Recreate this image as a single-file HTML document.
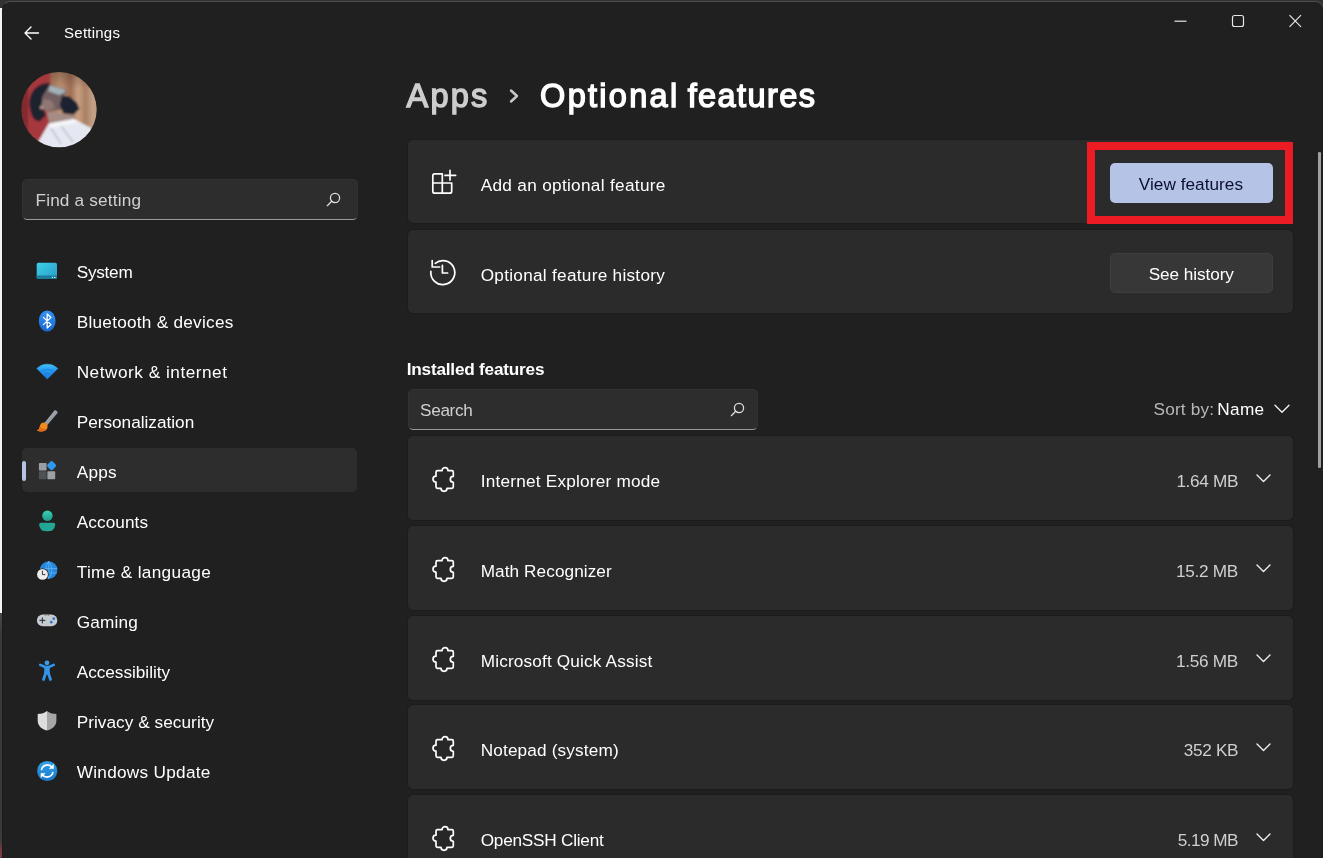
<!DOCTYPE html>
<html lang="en">
<head>
<meta charset="utf-8">
<title>Settings - Optional features</title>
<style>
*{box-sizing:border-box;margin:0;padding:0}
html,body{width:1323px;height:858px;overflow:hidden;background:#202020}
body{position:relative;font-family:"Liberation Sans",sans-serif;color:#fff;-webkit-font-smoothing:antialiased}
.abs{position:absolute}
.t{position:absolute;white-space:nowrap;line-height:20px;font-size:17.2px;color:#fff}
.card{position:absolute;left:408px;width:885px;height:83.4px;background:#2b2b2b;border-radius:5px;box-shadow:0 0 0 1px #1c1c1c}
.nav{left:77px}
.fn{left:481px}
.sz{color:#cfcfcf}
svg{position:absolute;overflow:visible}
</style>
</head>
<body>
<div id="root" style="position:absolute;left:0;top:0;width:1323px;height:858px;will-change:transform">
<!-- desktop strip behind window -->
<div class="abs" style="left:0;top:0;width:1323px;height:12px;background:#323232"></div>
<div class="abs" style="left:0;top:8px;width:3px;height:604.8px;background:#f4f4f4"></div>
<div class="abs" style="left:0;top:612.8px;width:3px;height:246px;background:linear-gradient(#4a4a4a,#3a3a3a 20px,#3a3a3a 226px,#7a3a40 238px)"></div>
<!-- window -->
<div id="win" class="abs" style="left:2.1px;top:.9px;width:1321.8px;height:880px;background:#202020;border:1.1px solid #4b4b4b;border-left-color:#1b1b1b;border-radius:8.5px"></div>

<!-- title bar -->
<svg style="left:23px;top:25px" width="18" height="16" viewBox="0 0 18 16" fill="none" stroke="#fff" stroke-width="1.4" stroke-linecap="round" stroke-linejoin="round"><path d="M15.5 8H2M8 2L2 8l6 6"/></svg>
<span class="t" id="t_settings" style="left:64.12px;top:23px;letter-spacing:0.229px;font-size:15px">Settings</span>
<svg style="left:1174px;top:14px" width="130" height="14" viewBox="0 0 130 14" fill="none" stroke="#e6e6e6" stroke-width="1.2"><path d="M0.5 7.2h12"/><rect x="58.5" y="1.5" width="11" height="11" rx="2"/><path d="M115.5 1.2l11.5 11.6M127 1.2l-11.5 11.6"/></svg>

<!-- avatar -->
<svg id="avatar" style="left:21px;top:72px" width="76" height="76" viewBox="0 0 76 76">
<defs><clipPath id="avc"><circle cx="38" cy="37.6" r="37.7"/></clipPath>
<filter id="avb" x="-10%" y="-10%" width="120%" height="120%"><feGaussianBlur stdDeviation="0.8"/></filter>
<linearGradient id="curt" x1="0" x2="1" y1="0" y2="0"><stop offset="0" stop-color="#a87a5e"/><stop offset=".2" stop-color="#c39776"/><stop offset=".4" stop-color="#9c6d53"/><stop offset=".55" stop-color="#caa282"/><stop offset=".7" stop-color="#a97f63"/><stop offset=".85" stop-color="#c4a288"/><stop offset="1" stop-color="#b8957a"/></linearGradient>
<linearGradient id="curtd" x1="0" x2="0" y1="0" y2="1"><stop offset="0" stop-color="#5a3a2c" stop-opacity=".55"/><stop offset=".25" stop-color="#5a3a2c" stop-opacity="0"/></linearGradient></defs>
<g clip-path="url(#avc)"><g filter="url(#avb)">
<rect x="-4" y="-4" width="84" height="84" fill="#a5383e"/>
<rect x="-4" y="-4" width="11" height="84" fill="#83292f"/>
<rect x="29.5" y="-4" width="50" height="84" fill="url(#curt)"/>
<rect x="29.5" y="-4" width="50" height="84" fill="url(#curtd)"/>
<path d="M28.6 11.6Q19 10 12 19Q6 28 9.7 40Q12 49 18.5 49.4L25 43L21 35L22 24L30 15Z" fill="#1b202d"/>
<path d="M28.6 12.9L43.3 17.1L46.4 20.3L41.2 24.5L40.2 38.1L25.5 39.2L20.2 35L21.3 24.5Z" fill="#735e60"/>
<path d="M29 13.5L43 17.4L45 20L38 23L27 19Z" fill="#a3b2ba"/>
<path d="M22 27L30 28L34 36L25.5 39.2L20.5 35Z" fill="#8f7773"/>
<circle cx="20.8" cy="35.4" r="2" fill="#b0918a"/>
<path d="M25.5 39.2L41 41.5L53 43.4L52 50L28.6 52.6Z" fill="#a58c85"/>
<path d="M41.2 23.4L48.5 24.5L55.9 30.8L58.5 37L52.7 42.6L42.3 41.5L38.6 33Z" fill="#1c2230"/>
<path d="M16 72L27.6 51.7L52.7 47L70 56L78 60V80H12Z" fill="#e6e8f1"/>
<path d="M40 54L52 70M30 56L40 72" stroke="#bcc0d2" stroke-width="1.5" fill="none"/>
<path d="M27.6 51.7L52.7 47L58 50L30 56Z" fill="#f6f6fa"/>
</g></g></svg>

<!-- sidebar search -->
<div class="abs" style="left:22.3px;top:179px;width:335.3px;height:41px;background:#2d2d2d;border-radius:5px;border:1px solid #323232;border-bottom:1.5px solid #9a9a9a"></div>
<span class="t" id="t_find" style="left:35.47px;top:190px;letter-spacing:0.176px;color:#d0d0d0">Find a setting</span>
<svg style="left:326px;top:192px" width="16" height="16" viewBox="0 0 16 16" fill="none" stroke="#e0e0e0" stroke-width="1.25" stroke-linecap="round"><circle cx="9" cy="6" r="4.6"/><path d="M5.7 9.3L1.3 13.7"/></svg>

<!-- selected nav -->
<div class="abs" style="left:22px;top:448px;width:335px;height:44px;background:#2d2d2d;border-radius:5px"></div>
<div class="abs" style="left:22px;top:461px;width:4px;height:20px;background:#b4c3e6;border-radius:2px"></div>

<!-- nav labels -->
<span class="t nav" id="n0" style="left:76.70px;top:262px;letter-spacing:-0.255px">System</span>
<span class="t nav" id="n1" style="left:76.70px;top:312px;letter-spacing:0.261px">Bluetooth &amp; devices</span>
<span class="t nav" id="n2" style="left:76.70px;top:362px;letter-spacing:0.522px">Network &amp; internet</span>
<span class="t nav" id="n3" style="left:76.70px;top:412px;letter-spacing:0.001px">Personalization</span>
<span class="t nav" id="n4" style="left:76.70px;top:462px;letter-spacing:0.283px">Apps</span>
<span class="t nav" id="n5" style="left:76.70px;top:512px;letter-spacing:0.101px">Accounts</span>
<span class="t nav" id="n6" style="left:76.70px;top:562px;letter-spacing:0.341px">Time &amp; language</span>
<span class="t nav" id="n7" style="left:76.70px;top:612px;letter-spacing:0.193px">Gaming</span>
<span class="t nav" id="n8" style="left:76.70px;top:662px;letter-spacing:-0.016px">Accessibility</span>
<span class="t nav" id="n9" style="left:76.70px;top:712px;letter-spacing:0.054px">Privacy &amp; security</span>
<span class="t nav" id="n10" style="left:76.70px;top:762px;letter-spacing:0.289px">Windows Update</span>

<!-- NAVICONS -->
<svg id="navicons" style="left:0;top:0" width="70" height="858" viewBox="0 0 70 858">
<defs>
<linearGradient id="gsys" x1="0" y1="0" x2="1" y2="1"><stop offset="0" stop-color="#3bd0ea"/><stop offset="1" stop-color="#2a9cc6"/></linearGradient>
<linearGradient id="gbt" x1="0" y1="0" x2="0" y2="1"><stop offset="0" stop-color="#3593f2"/><stop offset="1" stop-color="#1767d2"/></linearGradient>
<linearGradient id="gwifi" x1="0" y1="0" x2="0" y2="1"><stop offset="0" stop-color="#40c0fa"/><stop offset=".45" stop-color="#2497ee"/><stop offset="1" stop-color="#1b7be0"/></linearGradient>
<linearGradient id="ghandle" x1="0" y1="0" x2="1" y2="1"><stop offset="0" stop-color="#b9bec6"/><stop offset="1" stop-color="#7b8089"/></linearGradient>
<linearGradient id="gacc" x1="0" y1="0" x2="0" y2="1"><stop offset="0" stop-color="#3ad2b4"/><stop offset="1" stop-color="#1f9a8c"/></linearGradient>
<linearGradient id="gupd" x1="0" y1="0" x2="0" y2="1"><stop offset="0" stop-color="#31a2ec"/><stop offset="1" stop-color="#1b78c8"/></linearGradient>
</defs>
<!-- system -->
<rect x="36.7" y="262.8" width="20.3" height="16.2" rx="1.6" fill="url(#gsys)"/>
<path d="M36.7 275.6H57V277.4Q57 279 55.4 279H38.3Q36.7 279 36.7 277.4Z" fill="#1a7c9c"/>
<circle cx="52.4" cy="277.4" r=".7" fill="#d8f4fb"/><circle cx="54.8" cy="277.4" r=".7" fill="#d8f4fb"/>
<!-- bluetooth -->
<ellipse cx="47.2" cy="321" rx="8.4" ry="10.6" fill="url(#gbt)"/>
<path d="M43.4 317.4L51 324.6L47.2 328V314L51 317.4L43.4 324.6" fill="none" stroke="#fff" stroke-width="1.3" stroke-linejoin="round" stroke-linecap="round"/>
<!-- wifi -->
<path d="M47.3 379L36.8 368.5A14.85 14.85 0 0 1 57.8 368.5Z" fill="url(#gwifi)" stroke="url(#gwifi)" stroke-width=".6" stroke-linejoin="round"/>
<path d="M40.4 372.1A9.8 9.8 0 0 1 54.2 372.1" fill="none" stroke="#1a78de" stroke-width="1" opacity=".7"/>
<path d="M43.6 375.3A5.2 5.2 0 0 1 51 375.3" fill="none" stroke="#1768cf" stroke-width="1" opacity=".6"/>
<!-- brush -->
<path d="M54.6 410.3Q56.9 409.5 57.8 412.7L46.3 426.2L43.6 424Z" fill="url(#ghandle)"/>
<path d="M43.9 422.6Q47.8 423.2 47.6 427Q46.6 431.6 41 431.4Q38.2 431.6 36.8 430.6Q39.6 429.6 39.8 426.4Q40.4 422.8 43.9 422.6Z" fill="#f28a1e"/>
<path d="M41 431.4Q38.2 431.6 36.8 430.6Q39.6 429.6 39.8 426.4Q43 430 47.2 428.6Q45.8 431.4 41 431.4Z" fill="#e06a17"/>
<!-- apps -->
<rect x="38.9" y="463" width="7.7" height="7.4" rx=".7" fill="#9a9da2"/>
<rect x="38.9" y="471.3" width="7.7" height="7.9" rx=".7" fill="#4e5155"/>
<rect x="47.4" y="471.3" width="7.8" height="7.9" rx=".7" fill="#9da0a6"/>
<rect x="47.9" y="461.9" width="7.4" height="7.4" rx="2" fill="#2f98ec" transform="rotate(45 51.6 465.6)"/>
<!-- accounts -->
<circle cx="47.4" cy="515.7" r="5.2" fill="url(#gacc)"/>
<path d="M40.8 522.8H53.6Q55.2 522.8 55.2 524.4Q55.2 531.2 47.2 531.2Q39.2 531.2 39.2 524.4Q39.2 522.8 40.8 522.8Z" fill="#22a794"/>
<!-- time & language -->
<circle cx="48.7" cy="570" r="8.7" fill="#2388de"/>
<path d="M40.2 568.5H57.2M41 573H56.8M48.7 561.3V578.7M48.7 561.3Q42.5 570 48.7 578.7M48.7 561.3Q55 570 48.7 578.7" fill="none" stroke="#5fb2f2" stroke-width=".8"/>
<circle cx="42.5" cy="574.4" r="6.2" fill="#202020"/><circle cx="42.5" cy="574.4" r="5.4" fill="#ededed"/>
<path d="M42.4 571V574.6H45" fill="none" stroke="#333" stroke-width="1" stroke-linecap="round" stroke-linejoin="round"/>
<!-- gaming -->
<rect x="36.9" y="614.5" width="20.4" height="11.8" rx="5.9" fill="#c6cad1"/>
<path d="M42.4 617.8V622.8M39.9 620.3H44.9" stroke="#3a3f48" stroke-width="1.2" stroke-linecap="round"/>
<circle cx="51.3" cy="622.2" r="1.35" fill="#2b78d2"/><circle cx="53.8" cy="618.7" r="1.35" fill="#2b78d2"/>
<circle cx="45.8" cy="615.6" r=".5" fill="#555"/><circle cx="48.2" cy="615.6" r=".5" fill="#555"/>
<!-- accessibility -->
<circle cx="47" cy="662.8" r="2.4" fill="#3d9dea"/>
<path d="M40.2 664.9L45.2 667H48.8L53.8 664.9" fill="none" stroke="#3394e8" stroke-width="2.6" stroke-linecap="round" stroke-linejoin="round"/>
<rect x="44.2" y="666" width="5.6" height="8.4" rx="1" fill="#3394e8"/>
<path d="M45.7 673L43.5 679.5M48.3 673L50.5 679.5" fill="none" stroke="#3394e8" stroke-width="2.8" stroke-linecap="round"/>
<!-- privacy -->
<path d="M47 711C44 713.4 40.4 714 37.7 714V720.4C37.7 726 42 729.2 47 730.6Z" fill="#dddddd"/>
<path d="M47 711C50 713.4 53.6 714 56.4 714V720.4C56.4 726 52 729.2 47 730.6Z" fill="#a6a6a6"/>
<!-- update -->
<circle cx="47.2" cy="771" r="10.1" fill="url(#gupd)"/>
<path d="M41.6 769.4A5.9 5.9 0 0 1 52.2 767.6M52.8 772.6A5.9 5.9 0 0 1 42.2 774.4" fill="none" stroke="#fff" stroke-width="1.7" stroke-linecap="round"/>
<path d="M53.4 764.6V768.6H49.4ZM41 777.4V773.4H45Z" fill="#fff" stroke="#fff" stroke-width=".6" stroke-linejoin="round"/>
</svg>


<!-- heading -->
<span class="t" id="h_apps" style="left:406.55px;top:76px;letter-spacing:2.168px;font-size:32.5px;line-height:40px;-webkit-text-stroke:1.4px #cdcdcd;color:#cdcdcd">Apps</span>
<svg style="left:506.5px;top:87.5px" width="14" height="16" viewBox="0 0 14 16" fill="none" stroke="#c8c8c8" stroke-width="2.5" stroke-linecap="round" stroke-linejoin="round"><path d="M4 2.5l6 5.5-6 5.5"/></svg>
<span class="t" id="h_opt" style="left:540.11px;top:76px;letter-spacing:2.284px;font-size:32.5px;line-height:40px;-webkit-text-stroke:1.4px #fff">Optional</span>
<span class="t" id="h_feat" style="left:687.65px;top:76px;letter-spacing:1.423px;font-size:32.5px;line-height:40px;-webkit-text-stroke:1.4px #fff">features</span>

<!-- top cards -->
<div class="card" style="top:140px"></div>
<div class="card" style="top:230px"></div>
<svg style="left:428px;top:168px" width="30" height="30" viewBox="0 0 30 30" fill="none" stroke="#fff" stroke-width="1.7" stroke-linecap="round" stroke-linejoin="round"><path d="M14.3 5.8H6.8Q4.8 5.8 4.8 7.8V23.2Q4.8 25.2 6.8 25.2H21.7Q23.7 25.2 23.7 23.2V15H4.8M14.3 5.8V25.2M22 2.4V12M17 7.4H27.6"/></svg>
<svg style="left:428px;top:258px" width="30" height="30" viewBox="0 0 30 30" fill="none" stroke="#fff" stroke-width="1.7" stroke-linecap="round" stroke-linejoin="round"><path d="M7.2 5.3A12 12 0 1 1 2.87 13.35M4.2 2.6V9H11.6M14.4 7.4V15H19.6"/></svg>
<span class="t fn" id="c_add" style="left:480.70px;top:175px;letter-spacing:0.316px">Add an optional feature</span>
<span class="t fn" id="c_hist" style="left:480.70px;top:265px;letter-spacing:0.281px">Optional feature history</span>

<!-- buttons -->
<div class="abs" style="left:1110px;top:163px;width:163px;height:40px;background:#b4c3e6;border-radius:5px"></div>
<span class="t" id="b_view" style="left:1138.81px;top:174px;letter-spacing:0.032px;color:#0b1030">View features</span>
<div class="abs" style="left:1110px;top:253px;width:163px;height:40px;background:#373737;border-radius:5px;border:1px solid #3e3e3e"></div>
<span class="t" id="b_see" style="left:1148.74px;top:264px;letter-spacing:-0.083px">See history</span>
<!-- red highlight -->
<div class="abs" style="left:1087px;top:142px;width:206px;height:82px;border:8px solid #ec1c24"></div>

<!-- installed features -->
<span class="t" id="t_inst" style="left:406.77px;top:359px;letter-spacing:-0.217px;font-weight:bold">Installed features</span>
<div class="abs" style="left:408px;top:388.8px;width:350px;height:41.3px;background:#2d2d2d;border-radius:5px;border:1px solid #323232;border-bottom:1.5px solid #9a9a9a"></div>
<span class="t" id="t_search" style="left:420.07px;top:400px;letter-spacing:-0.351px;color:#d0d0d0">Search</span>
<svg style="left:730.2px;top:402px" width="16" height="16" viewBox="0 0 16 16" fill="none" stroke="#e0e0e0" stroke-width="1.25" stroke-linecap="round"><circle cx="9" cy="6" r="4.6"/><path d="M5.7 9.3L1.3 13.7"/></svg>
<span class="t" id="t_sort" style="left:1153.54px;top:399px;letter-spacing:0.165px;color:#b8b8b8">Sort by:</span>
<span class="t" id="t_name" style="left:1217.16px;top:399px;letter-spacing:0.393px">Name</span>
<svg style="left:1274px;top:404px" width="16" height="10" viewBox="0 0 16 10" fill="none" stroke="#f0f0f0" stroke-width="1.4" stroke-linecap="round" stroke-linejoin="round"><path d="M1 1.2l7 7 7-7"/></svg>

<!-- FEATURES -->
<div class="card" style="top:436px;height:84px"></div>
<svg style="left:430px;top:465px" width="26" height="30" viewBox="0 0 26 30" fill="#272727" stroke="#fff" stroke-width="1.7" stroke-linejoin="round"><path d="M7.5 5.7H12A3 3 0 0 1 18 5.7H21.8Q23.3 5.7 23.3 7.2V11.3A3 3 0 0 0 23.3 17.3V21.8Q23.3 23.3 21.8 23.3H17A3 3 0 0 1 11 23.3H7.5Q6 23.3 6 21.8V17.2A3 3 0 0 1 6 11.2V7.2Q6 5.7 7.5 5.7Z"/></svg>
<span class="t fn" id="f0" style="left:480.70px;top:471px;letter-spacing:0.217px">Internet Explorer mode</span>
<span class="t sz" id="s0" style="left:1176.38px;top:471px;letter-spacing:-0.324px">1.64 MB</span>
<svg style="left:1256px;top:474.3px" width="15" height="9" viewBox="0 0 15 9" fill="none" stroke="#f0f0f0" stroke-width="1.4" stroke-linecap="round" stroke-linejoin="round"><path d="M1 1l6.5 6.5L14 1"/></svg>
<div class="card" style="top:526px;height:84px"></div>
<svg style="left:430px;top:555px" width="26" height="30" viewBox="0 0 26 30" fill="#272727" stroke="#fff" stroke-width="1.7" stroke-linejoin="round"><path d="M7.5 5.7H12A3 3 0 0 1 18 5.7H21.8Q23.3 5.7 23.3 7.2V11.3A3 3 0 0 0 23.3 17.3V21.8Q23.3 23.3 21.8 23.3H17A3 3 0 0 1 11 23.3H7.5Q6 23.3 6 21.8V17.2A3 3 0 0 1 6 11.2V7.2Q6 5.7 7.5 5.7Z"/></svg>
<span class="t fn" id="f1" style="left:480.70px;top:561px;letter-spacing:0.080px">Math Recognizer</span>
<span class="t sz" id="s1" style="left:1175.97px;top:561px;letter-spacing:-0.302px">15.2 MB</span>
<svg style="left:1256px;top:564.3px" width="15" height="9" viewBox="0 0 15 9" fill="none" stroke="#f0f0f0" stroke-width="1.4" stroke-linecap="round" stroke-linejoin="round"><path d="M1 1l6.5 6.5L14 1"/></svg>
<div class="card" style="top:616px;height:84px"></div>
<svg style="left:430px;top:645px" width="26" height="30" viewBox="0 0 26 30" fill="#272727" stroke="#fff" stroke-width="1.7" stroke-linejoin="round"><path d="M7.5 5.7H12A3 3 0 0 1 18 5.7H21.8Q23.3 5.7 23.3 7.2V11.3A3 3 0 0 0 23.3 17.3V21.8Q23.3 23.3 21.8 23.3H17A3 3 0 0 1 11 23.3H7.5Q6 23.3 6 21.8V17.2A3 3 0 0 1 6 11.2V7.2Q6 5.7 7.5 5.7Z"/></svg>
<span class="t fn" id="f2" style="left:480.70px;top:651px;letter-spacing:0.161px">Microsoft Quick Assist</span>
<span class="t sz" id="s2" style="left:1175.97px;top:651px;letter-spacing:-0.302px">1.56 MB</span>
<svg style="left:1256px;top:654.3px" width="15" height="9" viewBox="0 0 15 9" fill="none" stroke="#f0f0f0" stroke-width="1.4" stroke-linecap="round" stroke-linejoin="round"><path d="M1 1l6.5 6.5L14 1"/></svg>
<div class="card" style="top:705px;height:84px"></div>
<svg style="left:430px;top:734px" width="26" height="30" viewBox="0 0 26 30" fill="#272727" stroke="#fff" stroke-width="1.7" stroke-linejoin="round"><path d="M7.5 5.7H12A3 3 0 0 1 18 5.7H21.8Q23.3 5.7 23.3 7.2V11.3A3 3 0 0 0 23.3 17.3V21.8Q23.3 23.3 21.8 23.3H17A3 3 0 0 1 11 23.3H7.5Q6 23.3 6 21.8V17.2A3 3 0 0 1 6 11.2V7.2Q6 5.7 7.5 5.7Z"/></svg>
<span class="t fn" id="f3" style="left:480.70px;top:740px;letter-spacing:0.158px">Notepad (system)</span>
<span class="t sz" id="s3" style="left:1183.76px;top:740px;letter-spacing:-0.316px">352 KB</span>
<svg style="left:1256px;top:743.3px" width="15" height="9" viewBox="0 0 15 9" fill="none" stroke="#f0f0f0" stroke-width="1.4" stroke-linecap="round" stroke-linejoin="round"><path d="M1 1l6.5 6.5L14 1"/></svg>
<div class="card" style="top:795px;height:84px"></div>
<svg style="left:430px;top:824px" width="26" height="30" viewBox="0 0 26 30" fill="#272727" stroke="#fff" stroke-width="1.7" stroke-linejoin="round"><path d="M7.5 5.7H12A3 3 0 0 1 18 5.7H21.8Q23.3 5.7 23.3 7.2V11.3A3 3 0 0 0 23.3 17.3V21.8Q23.3 23.3 21.8 23.3H17A3 3 0 0 1 11 23.3H7.5Q6 23.3 6 21.8V17.2A3 3 0 0 1 6 11.2V7.2Q6 5.7 7.5 5.7Z"/></svg>
<span class="t fn" id="f4" style="left:480.70px;top:830px;letter-spacing:-0.235px">OpenSSH Client</span>
<span class="t sz" id="s4" style="left:1177.78px;top:830px;letter-spacing:-0.566px">5.19 MB</span>
<svg style="left:1256px;top:833.3px" width="15" height="9" viewBox="0 0 15 9" fill="none" stroke="#f0f0f0" stroke-width="1.4" stroke-linecap="round" stroke-linejoin="round"><path d="M1 1l6.5 6.5L14 1"/></svg>
<!-- /FEATURES -->

<!-- scrollbar -->
<div class="abs" style="left:1318.1px;top:152px;width:2.5px;height:316px;background:#a0a0a0;border-radius:1.3px"></div>
</div>
</body>
</html>
